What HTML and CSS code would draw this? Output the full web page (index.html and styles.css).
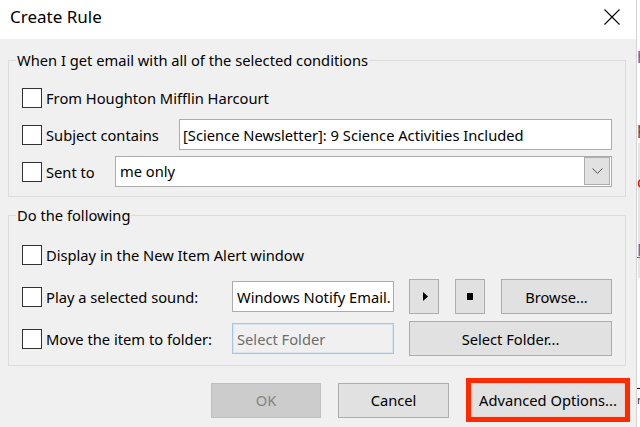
FILE: index.html
```html
<!DOCTYPE html>
<html lang="en">
<head>
    <meta charset="UTF-8">
    <meta name="viewport" content="width=device-width, initial-scale=1.0">
    <title>Create Rule</title>
    <link rel="stylesheet" href="styles.css">
</head>
<body>
    <div class="screen">
        <!-- Create Rule dialog -->
        <div class="dialog">
            <header class="titlebar">
                <h1 class="title">Create Rule</h1>
                <button class="close-btn" aria-label="Close">
                    <svg viewBox="0 0 16 16"><path d="M0.5 0.5L15.5 15.5M15.5 0.5L0.5 15.5" stroke="#000" stroke-width="1.1" fill="none"/></svg>
                </button>
            </header>

            <div class="dialog-body">
                <fieldset class="group">
                    <legend>When I get email with all of the selected conditions</legend>
                    <div class="rows">
                        <div class="row">
                            <label class="option"><input type="checkbox" class="check"><span>From Houghton Mifflin Harcourt</span></label>
                        </div>
                        <div class="row">
                            <label class="option option-subject"><input type="checkbox" class="check"><span>Subject contains</span></label>
                            <input type="text" class="text-field field-subject" value="[Science Newsletter]: 9 Science Activities Included">
                        </div>
                        <div class="row">
                            <label class="option option-sent"><input type="checkbox" class="check"><span>Sent to</span></label>
                            <div class="combo">
                                <span class="combo-value">me only</span>
                                <span class="combo-btn">
                                    <svg viewBox="0 0 11 6" width="11" height="6"><path d="M0.5 0.5L5.5 5.3L10.5 0.5" stroke="#505050" stroke-width="1" fill="none"/></svg>
                                </span>
                            </div>
                        </div>
                    </div>
                </fieldset>

                <fieldset class="group group-actions">
                    <legend>Do the following</legend>
                    <div class="rows">
                        <div class="row">
                            <label class="option"><input type="checkbox" class="check"><span>Display in the New Item Alert window</span></label>
                        </div>
                        <div class="row">
                            <label class="option option-wide"><input type="checkbox" class="check"><span>Play a selected sound:</span></label>
                            <input type="text" class="text-field field-sound" value="Windows Notify Email.wav">
                            <button class="btn btn-icon btn-play" aria-label="Play">
                                <svg viewBox="0 0 5 9" width="5" height="9"><path d="M0 0L5 4.5L0 9Z" fill="#000"/></svg>
                            </button>
                            <button class="btn btn-icon btn-stop" aria-label="Stop"><span class="stop-square"></span></button>
                            <button class="btn btn-browse">Browse...</button>
                        </div>
                        <div class="row">
                            <label class="option option-wide"><input type="checkbox" class="check"><span>Move the item to folder:</span></label>
                            <input type="text" class="text-field field-folder" value="Select Folder" disabled>
                            <button class="btn btn-folder">Select Folder...</button>
                        </div>
                    </div>
                </fieldset>

                <div class="footer">
                    <button class="btn btn-ok" disabled>OK</button>
                    <button class="btn btn-cancel">Cancel</button>
                    <span class="highlight"><button class="btn btn-advanced">Advanced Options...</button></span>
                </div>
            </div>
        </div>

        <!-- window behind the dialog -->
        <div class="backdrop">
            <span class="peek peek-h">h</span>
            <span class="peek peek-p">p</span>
            <span class="peek-shade"></span>
            <span class="peek peek-c">c</span>
            <span class="peek peek-m">M</span>
            <span class="peek-dash"></span>
            <span class="peek peek-r">r</span>
        </div>
    </div>
</body>
</html>
```

FILE: styles.css
```css
* {
    box-sizing: border-box;
}

body {
    margin: 0;
    font-family: "Noto Sans", "Open Sans", sans-serif;
    font-size: 14.7px;
    color: #000;
    background: #fff;
}

.screen {
    display: flex;
    width: 640px;
    height: 427px;
    overflow: hidden;
}

.dialog {
    width: 636px;
    flex-shrink: 0;
    background: #f0f0f0;
}

.titlebar {
    height: 39px;
    background: #fff;
    display: flex;
    justify-content: space-between;
    align-items: flex-start;
    padding-left: 10px;
}

.title {
    margin: 5px 0 0;
    font-size: 17px;
    font-weight: normal;
    line-height: 24px;
}

.close-btn {
    display: flex;
    width: 16px;
    height: 16px;
    margin: 9px 16px 0 0;
    padding: 0;
    border: none;
    background: none;
}

.close-btn svg {
    width: 16px;
    height: 16px;
}

.dialog-body {
    padding: 11px 10px 0 8px;
}

.group {
    margin: 0;
    padding: 12px 13px 9px;
    border: 1px solid #dcdcdc;
    min-width: 0;
}

.group + .group {
    margin-top: 8px;
}

.group legend {
    margin-left: -6px;
    padding: 0 1px;
    line-height: 20px;
}

.rows {
    display: flex;
    flex-direction: column;
    gap: 6px;
}

.row {
    display: flex;
    align-items: center;
    height: 31px;
}

.group-actions .rows {
    gap: 7px;
}

.group-actions .row {
    height: 35px;
}

.option {
    display: flex;
    align-items: center;
    gap: 4px;
    flex-shrink: 0;
    white-space: nowrap;
}

.option-subject {
    width: 157px;
}

.option-sent {
    width: 93px;
}

.option-wide {
    width: 210px;
}

.check {
    appearance: none;
    flex-shrink: 0;
    width: 20px;
    height: 20px;
    margin: 0;
    border: 1px solid #333;
    background: #fff;
}

.text-field {
    height: 31px;
    min-width: 0;
    padding: 0 3px;
    border: 1px solid #acacac;
    background: #fff;
    font: inherit;
    color: #000;
}

.field-subject {
    flex: 1;
}

.field-sound,
.field-folder {
    width: 162px;
    padding-left: 4px;
}

.field-folder {
    border-color: #a9c3e2;
    box-shadow: inset 0 0 0 1px #d9e5f2;
    background: #f0f0f0;
    color: #6d6d6d;
}

.combo {
    flex: 1;
    height: 31px;
    display: flex;
    justify-content: space-between;
    padding-left: 4px;
    border: 1px solid #acacac;
    background: #fff;
}

.combo-value {
    line-height: 29px;
}

.combo-btn {
    width: 26px;
    height: 28px;
    margin-right: 1px;
    display: flex;
    align-items: center;
    justify-content: center;
    border: 1px solid #adadad;
    background: #e1e1e1;
}

.btn {
    flex-shrink: 0;
    height: 35px;
    padding: 0;
    border: 1px solid #adadad;
    background: #e1e1e1;
    font: inherit;
    color: #000;
}

.btn-icon {
    width: 30px;
    margin-left: 16px;
    display: flex;
    align-items: center;
    justify-content: center;
}

.btn-play {
    margin-left: 15px;
    padding-left: 2px;
}

.stop-square {
    width: 6px;
    height: 7px;
    background: #000;
}

.btn-browse {
    width: 111px;
    margin-left: 16px;
}

.btn-folder {
    width: 203px;
    margin-left: 15px;
}

.footer {
    display: flex;
    justify-content: flex-end;
    align-items: center;
    gap: 17px;
    margin: 12px -4px 0 0;
}

.btn-ok {
    width: 110px;
    border-color: #bfbfbf;
    background: #ccc;
    color: #838383;
}

.btn-cancel {
    width: 111px;
}

.highlight {
    display: flex;
    border: 5px solid #ff2a00;
}

.btn-advanced {
    width: 154px;
    height: 34px;
    border-color: #f0d2ca;
}

/* strip of the app window behind the dialog */
.backdrop {
    position: relative;
    flex: 1;
    background: #fff;
    border-left: 1px solid #d4d4d4;
    overflow: hidden;
}

.peek {
    position: absolute;
    left: 0;
    font-size: 16px;
    line-height: 16px;
}

.peek-h {
    top: 49px;
    color: #2e75b6;
}

.peek-p {
    top: 120px;
    color: #44546a;
}

.peek-shade {
    position: absolute;
    top: 143px;
    left: 1px;
    width: 3px;
    height: 135px;
    background: #e6e6e6;
}

.peek-c {
    top: 174px;
    color: #e00000;
}

.peek-m {
    top: 242px;
    color: #1583c6;
    text-decoration: underline;
}

.peek-dash {
    position: absolute;
    top: 388px;
    left: 0;
    width: 4px;
    height: 1px;
    background: #000;
}

.peek-r {
    top: 394px;
    font-size: 11px;
    line-height: 12px;
    color: #333;
}
```
